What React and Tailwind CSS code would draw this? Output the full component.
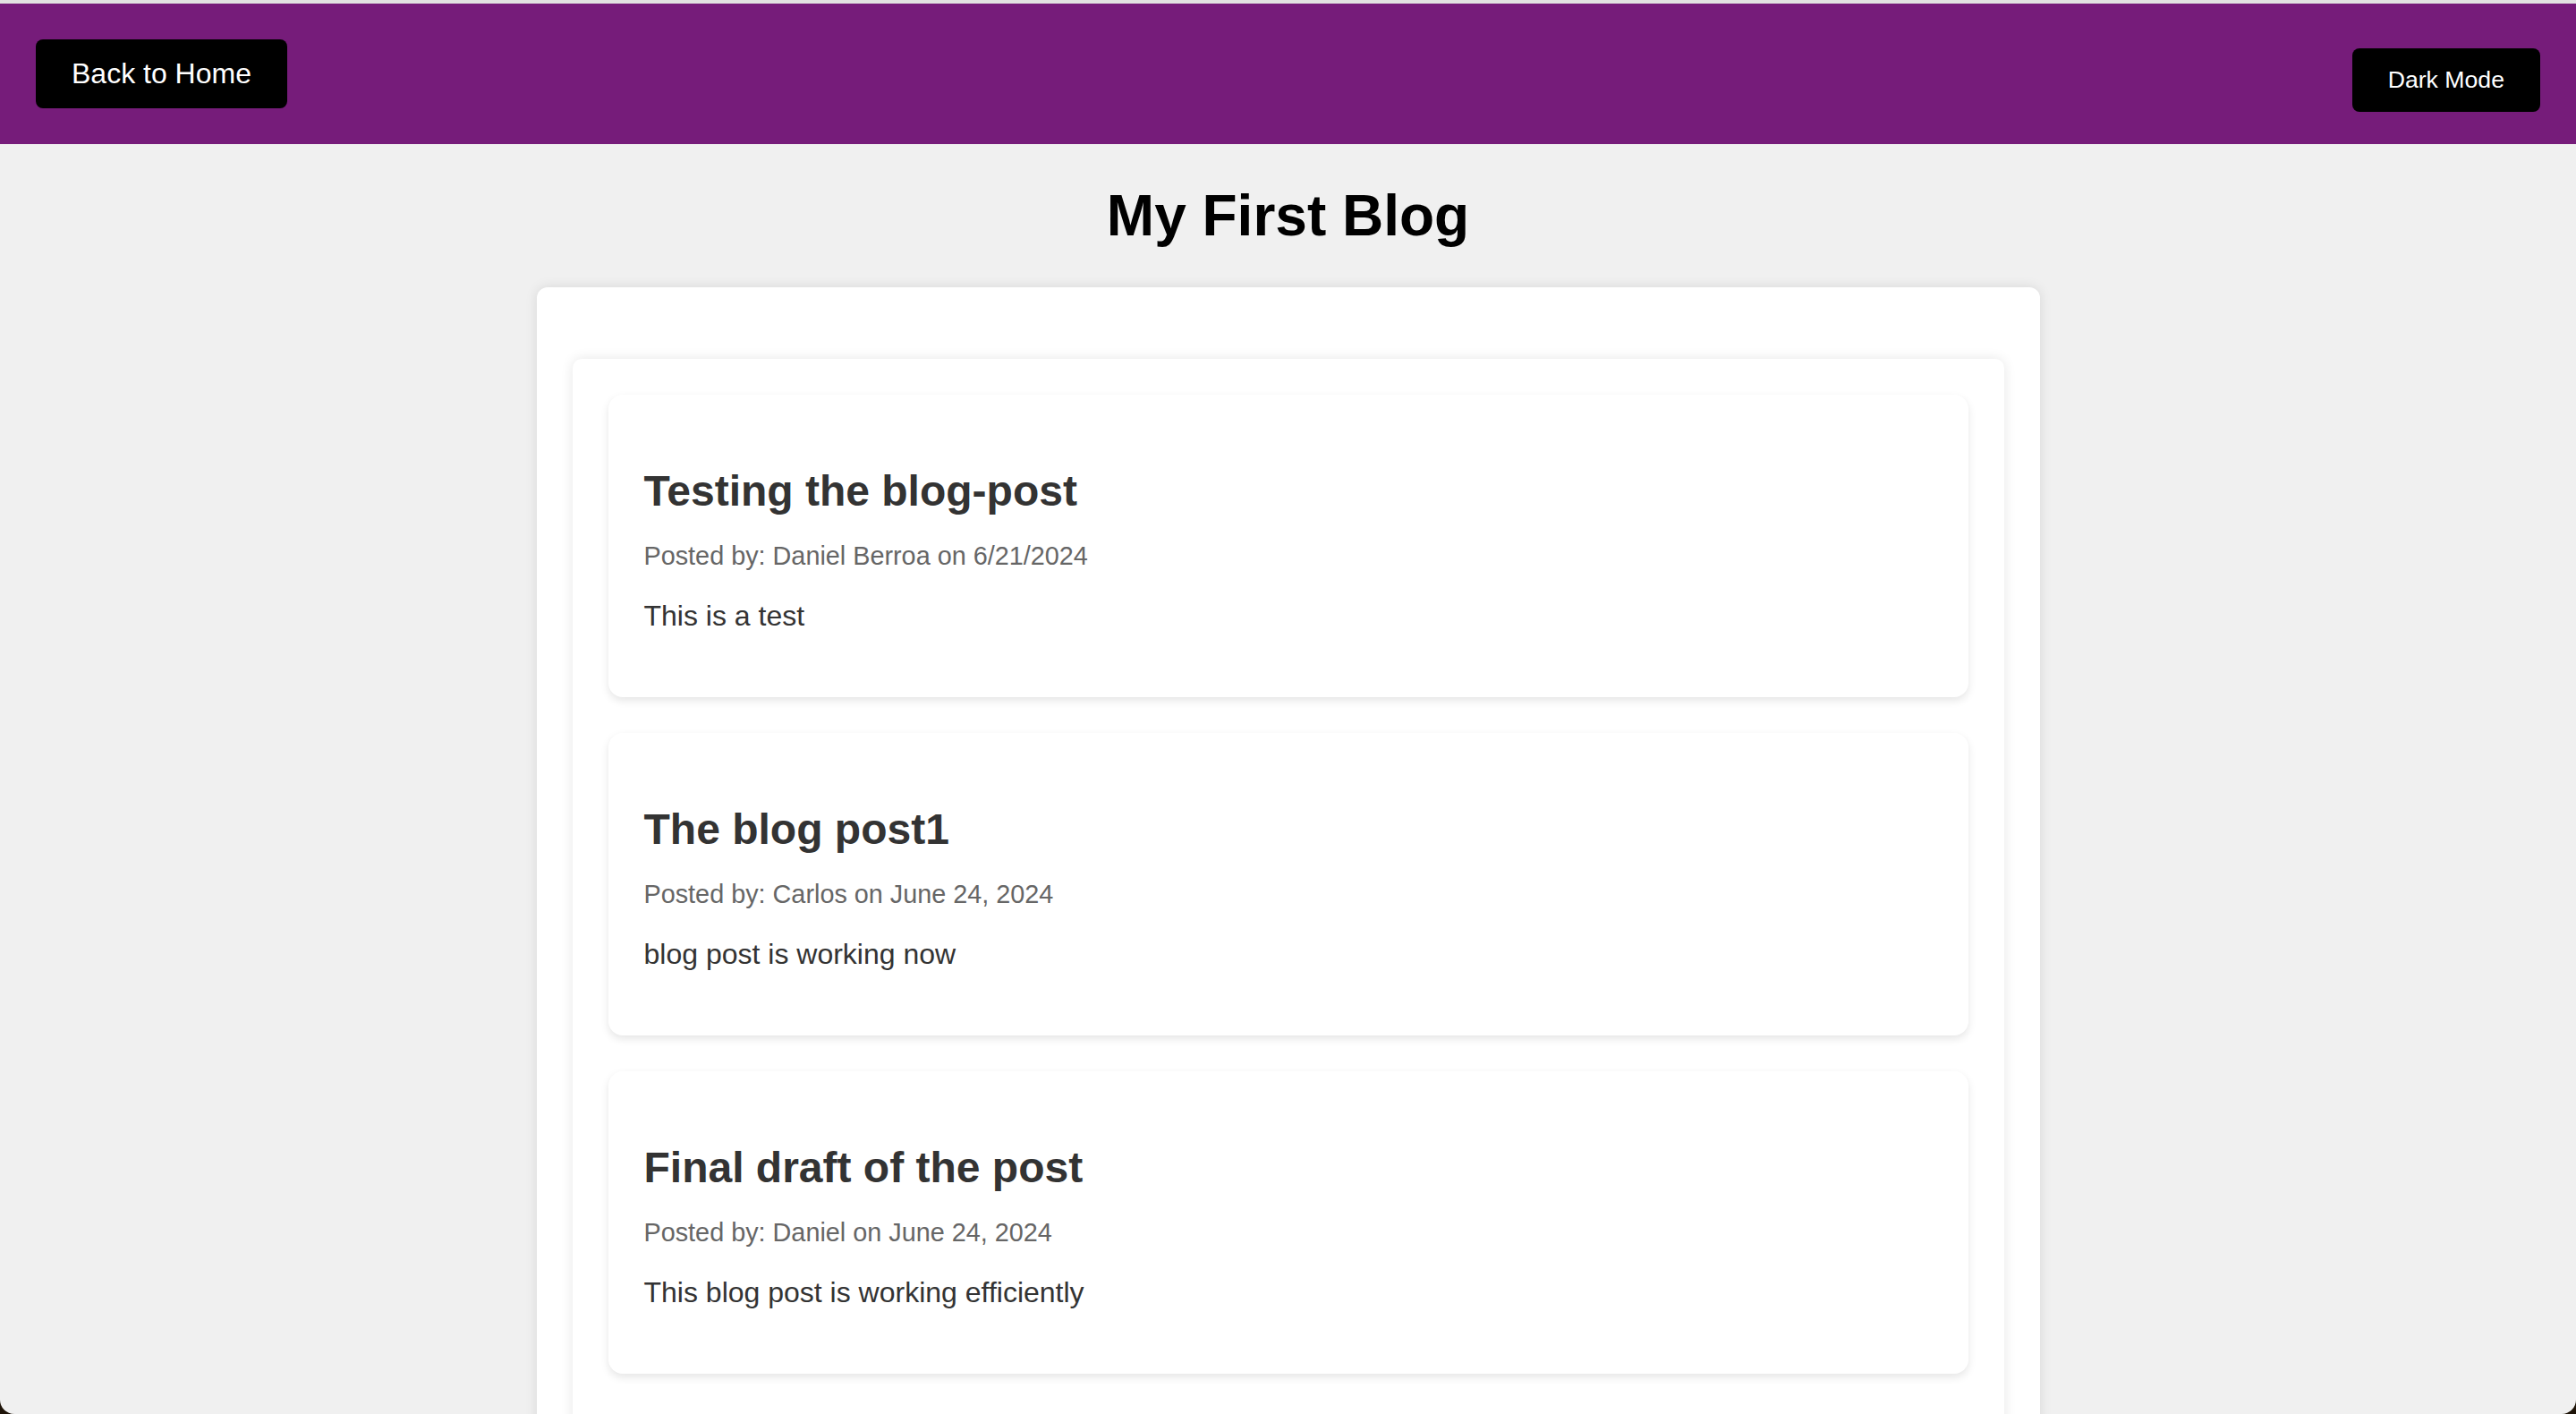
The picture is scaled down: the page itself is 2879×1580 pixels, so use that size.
const posts = [
  {
    title: "Testing the blog-post",
    author: "Daniel Berroa",
    date: "6/21/2024",
    body: "This is a test",
  },
  {
    title: "The blog post1",
    author: "Carlos",
    date: "June 24, 2024",
    body: "blog post is working now",
  },
  {
    title: "Final draft of the post",
    author: "Daniel",
    date: "June 24, 2024",
    body: "This blog post is working efficiently",
  },
];

const PostCard = ({ post }) => (
  <div className="rounded-[16px] bg-white px-[40px] py-[40px] shadow-[0_4px_10px_rgba(0,0,0,0.1)]">
    <h2 className="mt-[40px] mb-[29px] text-[48px] font-bold leading-[55px] text-[#333]">
      {post.title}
    </h2>
    <p className="my-[29px] text-[28.8px] leading-[33px] text-[#666]">
      Posted by: {post.author} on {post.date}
    </p>
    <p className="mt-[32px] mb-[32px] text-[32px] leading-[37px] text-[#333]">
      {post.body}
    </p>
  </div>
);

export default function App() {
  return (
    <div
      className="h-[1580px] overflow-hidden bg-[#f0f0f0]"
      style={{ fontFamily: '"Liberation Sans", Arial, sans-serif' }}
    >
      {/* Header */}
      <div className="h-[4px] bg-[#e2e2e2]" />
      <header className="flex h-[157px] items-start justify-between bg-[#761c7a] p-[40px]">
        <button className="rounded-[8px] bg-black px-[40px] py-[20px] text-[32px] leading-[37px] text-white">
          Back to Home
        </button>
        <button className="mt-[10px] rounded-[8px] bg-black px-[40px] py-[20px] text-[26.67px] leading-[31px] text-white">
          Dark Mode
        </button>
      </header>

      <h1 className="my-[43px] text-center text-[64px] font-bold leading-[74px] text-black">
        My First Blog
      </h1>

      {/* Outer panel */}
      <div className="mx-auto w-[1680px] rounded-[12px] bg-white px-[40px] pt-[80px] pb-[40px] shadow-[0_0_14px_rgba(0,0,0,0.1)]">
        <div className="flex flex-col gap-[40px] rounded-[10px] bg-white px-[40px] pt-[40px] pb-[160px] shadow-[0_0_14px_rgba(0,0,0,0.1)]">
          {posts.map((p) => (
            <PostCard key={p.title} post={p} />
          ))}
        </div>
      </div>

      {/* window corners */}
      <div className="fixed bottom-0 left-0 h-[16px] w-[16px] overflow-hidden">
        <div className="absolute -top-[16px] left-0 h-[32px] w-[32px] rounded-full shadow-[0_0_0_16px_#1e1408]" />
      </div>
      <div className="fixed bottom-0 right-0 h-[16px] w-[16px] overflow-hidden">
        <div className="absolute -top-[16px] right-0 h-[32px] w-[32px] rounded-full shadow-[0_0_0_16px_#1e1408]" />
      </div>
    </div>
  );
}
